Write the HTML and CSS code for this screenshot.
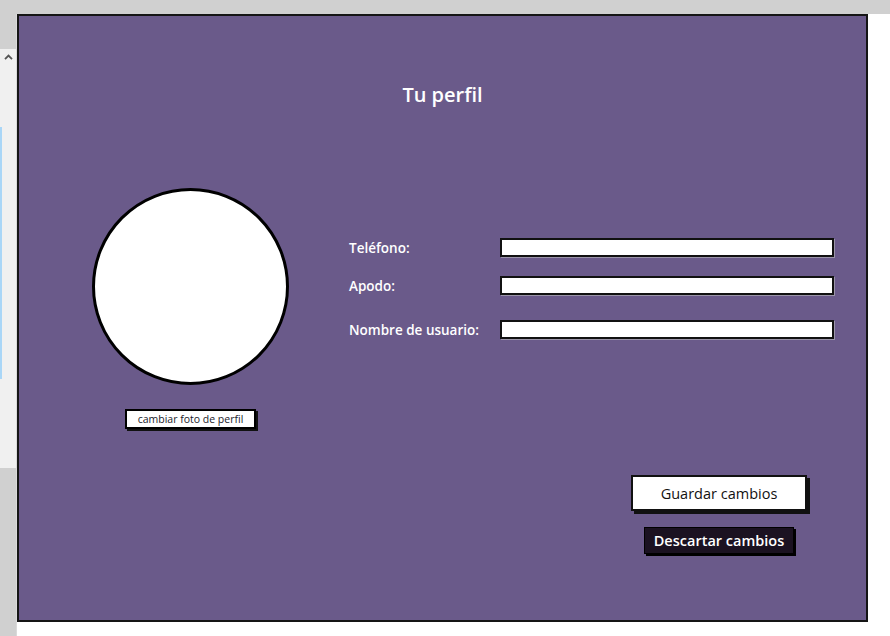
FILE: index.html
```html
<!DOCTYPE html>
<html lang="es">
<head>
<meta charset="utf-8">
<title>Tu perfil</title>
<link rel="stylesheet" href="styles.css">
</head>
<body>
<div class="topbar"></div>
<div class="main">
  <aside class="rail">
    <div class="rail-top"></div>
    <div class="rail-track">
      <svg class="chev" width="9" height="6" viewBox="0 0 9 6"><path d="M1 5.2 L4.5 1.6 L8 5.2" fill="none" stroke="#555" stroke-width="1.8"/></svg>
      <span class="rail-blue"></span>
    </div>
    <div class="rail-bottom"></div>
  </aside>
  <section class="panel">
    <h1 class="title">Tu perfil</h1>
    <div class="content">
      <div class="photo-col">
        <div class="avatar"></div>
        <button class="photo-btn">cambiar foto de perfil</button>
      </div>
      <form class="form">
        <div class="row">
          <label class="label">Teléfono:</label>
          <input class="field" type="text">
        </div>
        <div class="row row-2">
          <label class="label">Apodo:</label>
          <input class="field" type="text">
        </div>
        <div class="row row-3">
          <label class="label">Nombre de usuario:</label>
          <input class="field" type="text">
        </div>
      </form>
    </div>
    <div class="actions">
      <button class="btn-save">Guardar cambios</button>
      <button class="btn-discard">Descartar cambios</button>
    </div>
  </section>
</div>
</body>
</html>
```

FILE: styles.css
```css
* { box-sizing: border-box; }
html, body { margin: 0; padding: 0; }
body {
  width: 890px;
  height: 636px;
  overflow: hidden;
  background: #ffffff;
  font-family: "Open Sans", "Liberation Sans", sans-serif;
}
.topbar {
  height: 14px;
  background: #d0d0d0;
}
.main {
  display: flex;
  height: 622px;
}
.rail {
  width: 17px;
  display: flex;
  flex-direction: column;
  border-right: 1px solid #dadada;
}
.rail-top { height: 35px; background: #d0d0d0; }
.rail-track {
  height: 419px;
  background: #f0f0f0;
  display: flex;
  flex-direction: column;
  align-items: flex-start;
}
.chev { margin: 5px 0 0 4px; display: block; }
.rail-blue {
  display: block;
  width: 2px;
  height: 252px;
  margin-top: 67px;
  background: #a9d6f7;
}
.rail-bottom { flex: 1; background: #d0d0d0; }

.panel {
  width: 851px;
  height: 608px;
  background: #6a5a8a;
  border: 2px solid #151515;
  display: flex;
  flex-direction: column;
}
.title {
  margin: 0;
  padding-top: 67px;
  text-align: center;
  font-size: 20px;
  line-height: 24px;
  font-weight: 600;
  color: #ffffff;
}
.content {
  display: flex;
  align-items: flex-start;
  padding-top: 81px;
}
.photo-col {
  margin-left: 73px;
  width: 197px;
  display: flex;
  flex-direction: column;
  align-items: center;
}
.avatar {
  width: 197px;
  height: 197px;
  border-radius: 50%;
  border: 3px solid #000;
  background: #fff;
}
.photo-btn {
  margin-top: 24px;
  width: 131px;
  height: 20px;
  padding: 0;
  background: #fff;
  border: 2px solid #000;
  box-shadow: 2px 2px 0 #111;
  font-family: inherit;
  font-size: 10.5px;
  color: #1a1a2a;
  line-height: 16px;
}
.form {
  margin: 50px 0 0 60px;
  display: flex;
  flex-direction: column;
}
.row {
  display: flex;
  align-items: center;
  height: 19px;
}
.row-2 { margin-top: 19px; }
.row-3 { margin-top: 25px; }
.label {
  width: 151px;
  color: #fff;
  font-size: 13.5px;
  font-weight: 600;
}
.field {
  width: 334px;
  height: 19px;
  margin: 0;
  background: #fff;
  border: 2px solid #111;
  box-shadow: 1px 1px 0 #9a94a8;
  padding: 0;
}
.actions {
  align-self: flex-end;
  margin: 46px 59px 0 0;
  width: 176px;
  display: flex;
  flex-direction: column;
  align-items: center;
}
.btn-save {
  width: 176px;
  height: 36px;
  padding: 0;
  background: #fff;
  border: 2px solid #111;
  box-shadow: 3px 3px 0 #111;
  font-family: inherit;
  font-size: 14.5px;
  color: #111;
}
.btn-discard {
  margin-top: 16px;
  width: 150px;
  height: 27px;
  padding: 0;
  background: #1b1221;
  border: 1px solid #000;
  box-shadow: 2px 2px 0 #000;
  font-family: inherit;
  font-size: 14.5px;
  font-weight: 600;
  color: #fff;
}
```
